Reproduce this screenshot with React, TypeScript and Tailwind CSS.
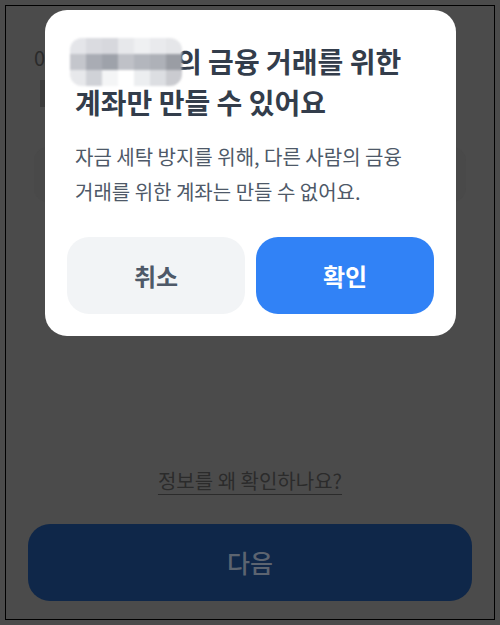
const mosaic = [
  ['#e4e5e9', '#dadbe0', '#d7d8dd', '#e7e8eb', '#eff0f2', '#e9eaed', '#e5e6e9'],
  ['#c4c6cc', '#a9acb4', '#9ea2aa', '#bfc1c7', '#b3b6bd', '#aeb1b8', '#9a9da4'],
  ['#e7e8eb', '#d0d2d7', '#f4f5f6', '#ffffff', '#eceef0', '#dcdee2', '#cacbd0'],
]

function Mosaic() {
  return (
    <span className="relative inline-block w-[101px] h-[40px] align-top">
      <span className="absolute left-[-5px] top-[-3px] flex flex-col rounded-[12px] overflow-hidden blur-[1px]">
        {mosaic.map((row, i) => (
          <span key={i} className="flex">
            {row.map((c, j) => (
              <span key={j} className="block w-[16px] h-[16px]" style={{ background: c }} />
            ))}
          </span>
        ))}
      </span>
    </span>
  )
}

export default function App() {
  return (
    <div
      className="w-[500px] h-[625px] bg-[#4b4b4b] p-[5px]"
      style={{ fontFamily: '"Noto Sans CJK KR", "Noto Sans", sans-serif' }}
    >
      <div className="relative h-full border border-black flex flex-col">
        {/* page behind the dim layer */}
        <div className="px-[28px] pt-[40px]">
          <p className="text-[20px] leading-[24px] text-[#2a2a2a]">0</p>
          <div className="ml-[6px] mt-[10px] w-[10px] h-[27px] bg-[#3c3c3c]" />
          <div className="mt-[40px] h-[55px] rounded-[14px] bg-[#494949]" />
        </div>

        <div className="mt-auto flex flex-col items-center">
          <button className="text-[20px] leading-[24px] text-[#2b2b2b] underline underline-offset-[5px] decoration-[1px]">
            정보를 왜 확인하나요?
          </button>
          <div className="w-full px-[22px] pt-[31px] pb-[18px]">
            <button className="w-full h-[77px] rounded-[22px] bg-[#0f2749] text-[25px] font-medium text-[#5c6470]">
              다음
            </button>
          </div>
        </div>

        {/* dialog */}
        <div className="absolute left-[39px] top-[4px] w-[411px] bg-white rounded-[22px] pt-[31px] pb-[22px] px-[22px]">
          <h2 className="px-[8px] text-[28px] leading-[41px] font-bold text-[#333d4b] whitespace-nowrap">
            <Mosaic />의 금융 거래를 위한
            <br />
            계좌만 만들 수 있어요
          </h2>
          <p className="mt-[16px] px-[8px] text-[20px] leading-[35px] text-[#4e5968] whitespace-nowrap">
            자금 세탁 방지를 위해, 다른 사람의 금융
            <br />
            거래를 위한 계좌는 만들 수 없어요.
          </p>
          <div className="mt-[28px] flex gap-[11px]">
            <button className="flex-1 h-[77px] rounded-[22px] bg-[#f2f4f6] text-[24px] font-bold text-[#4e5968]">
              취소
            </button>
            <button className="flex-1 h-[77px] rounded-[22px] bg-[#3182f6] text-[24px] font-bold text-white">
              확인
            </button>
          </div>
        </div>
      </div>
    </div>
  )
}
